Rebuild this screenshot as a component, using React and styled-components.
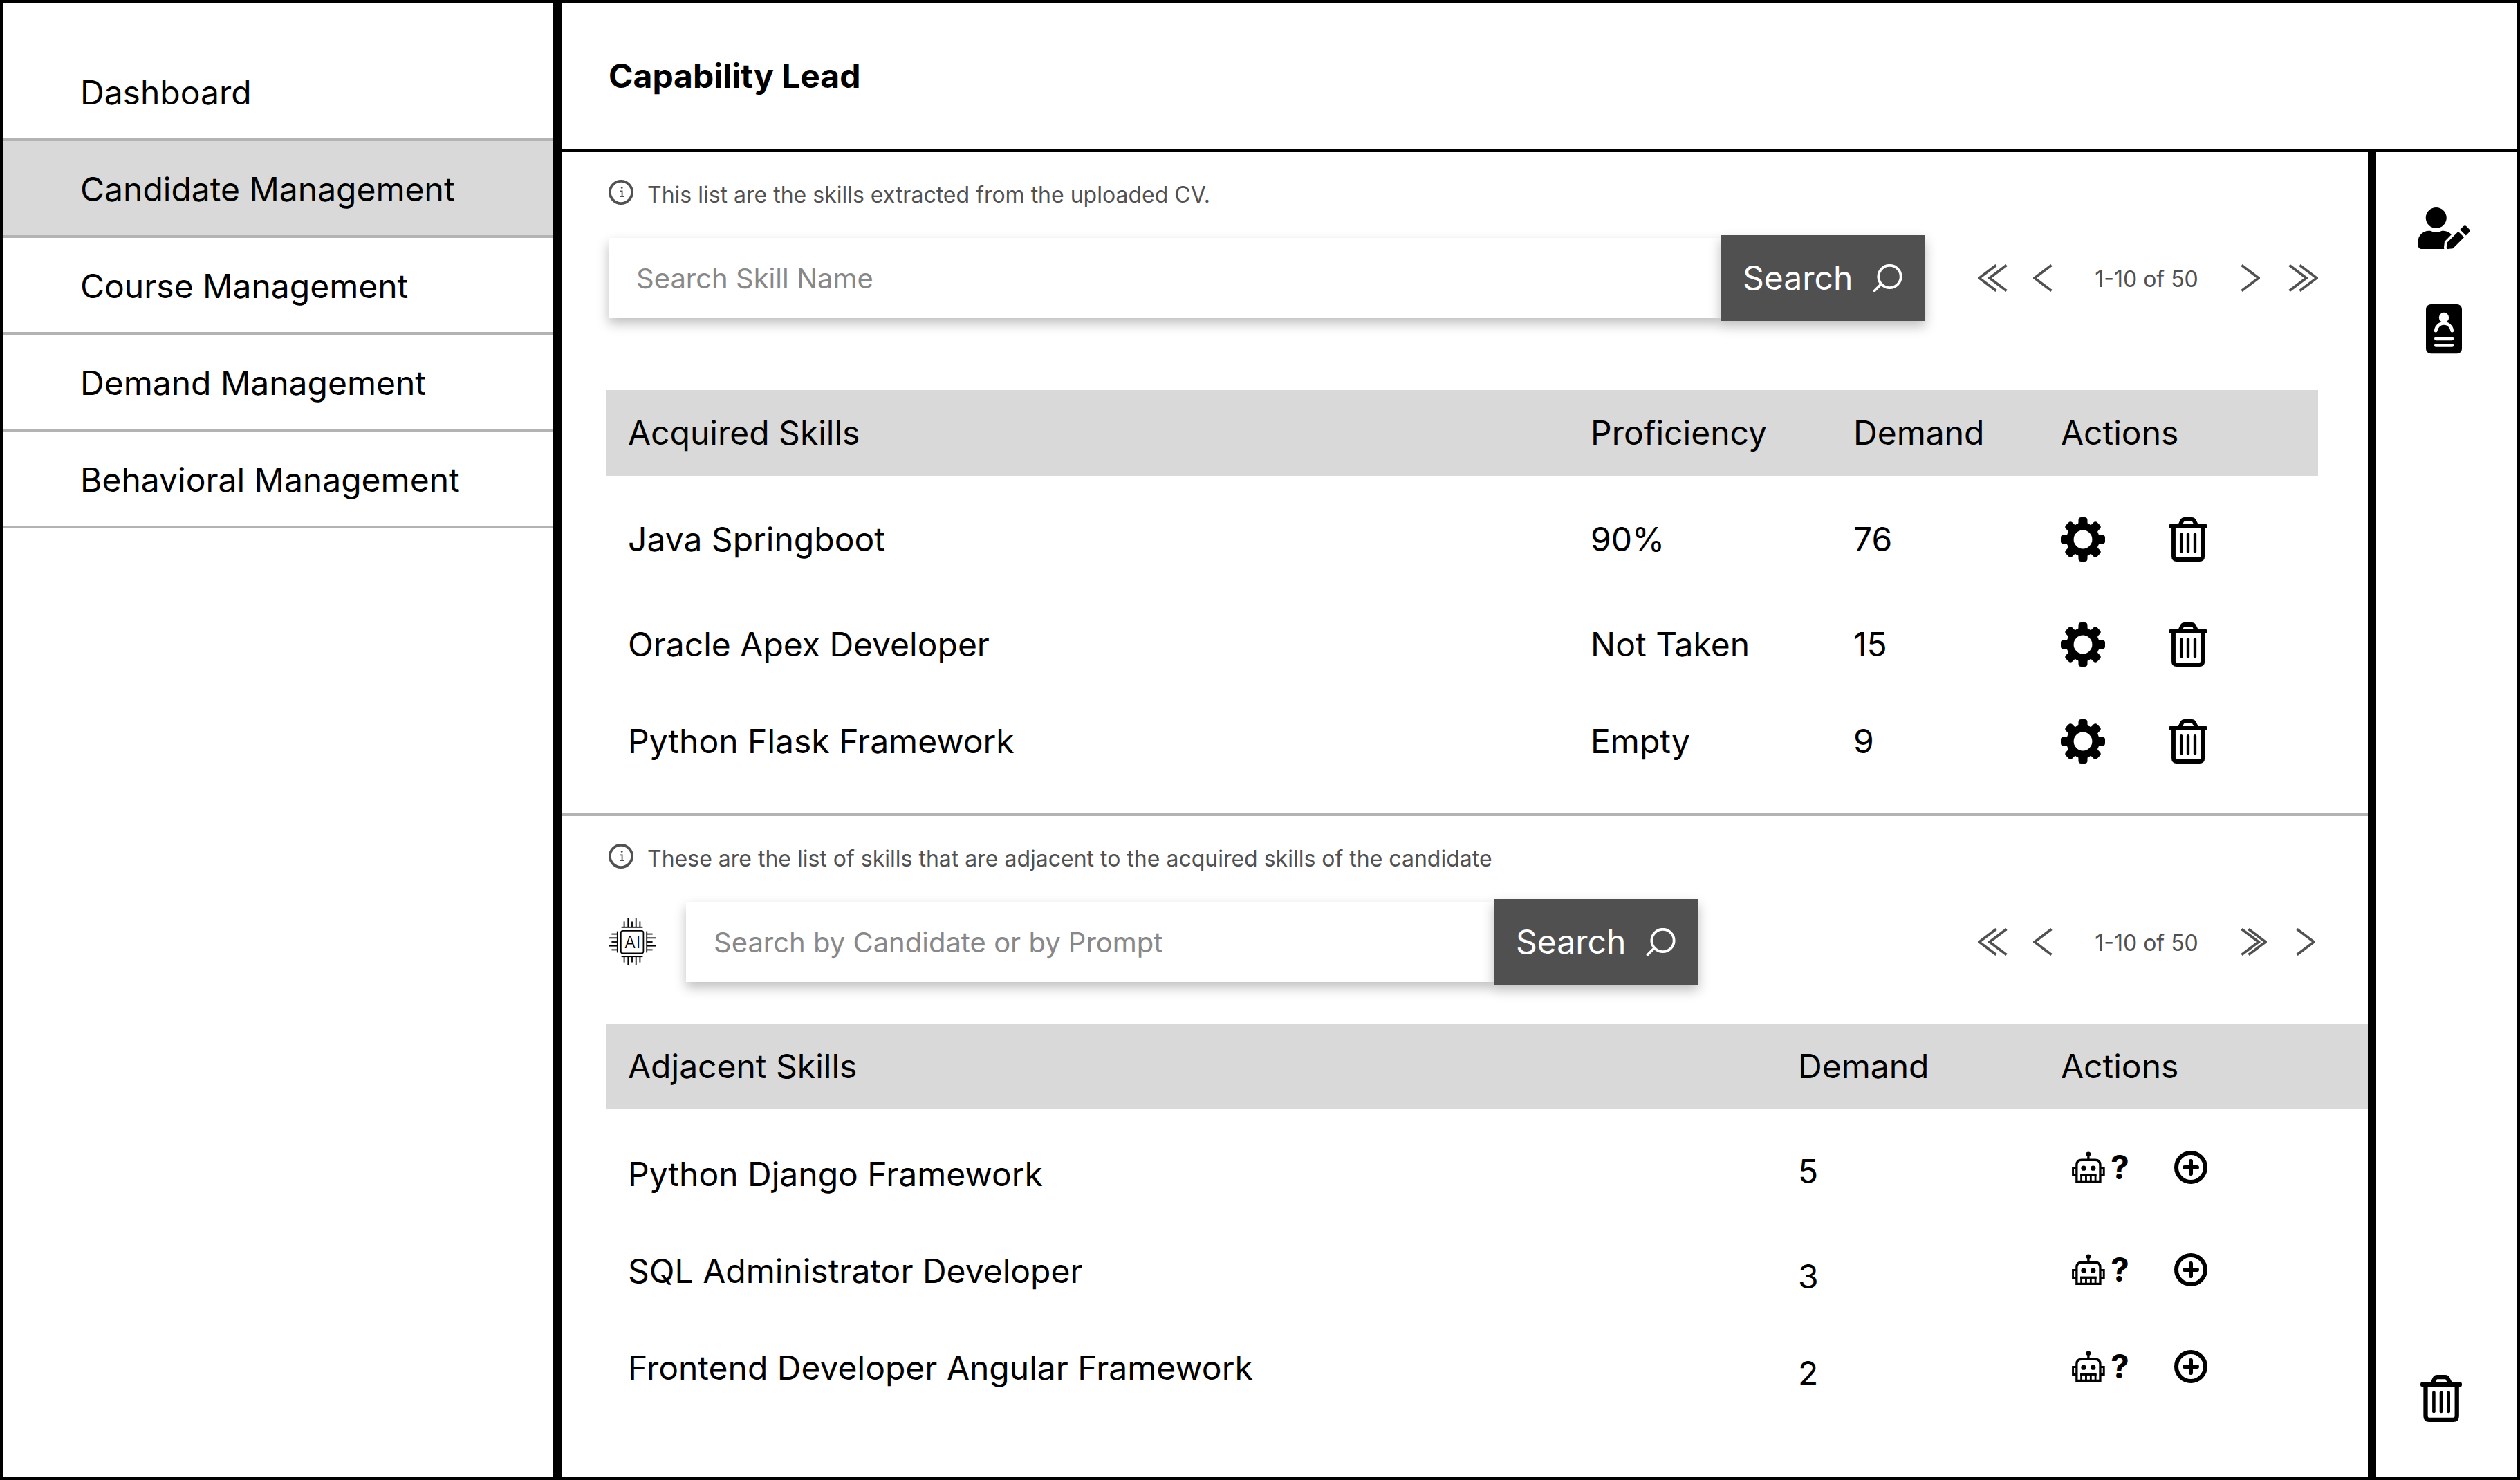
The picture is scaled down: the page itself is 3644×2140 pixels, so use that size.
import React from "react";
import styled, { createGlobalStyle, css } from "styled-components";
import { FaUserEdit } from "react-icons/fa";

const color = {
  ink: "#000000",
  paper: "#ffffff",
  band: "#d9d9d9",
  rule: "#b3b3b3",
  button: "#505050",
  note: "#515151",
  hint: "#888888",
};

const GlobalStyle = createGlobalStyle`
  *, *::before, *::after { box-sizing: border-box; }
  body {
    margin: 0;
    background: ${color.paper};
    color: ${color.ink};
    font-family: Inter, "Liberation Sans", sans-serif;
    font-size: 48px;
    line-height: 60px;
  }
  svg { display: block; flex: none; }
`;

/* ---------- page frame ---------- */

const Page = styled.div`
  display: flex;
  min-height: 100vh;
  border: 4px solid ${color.ink};
`;

const Sidebar = styled.nav`
  flex: none;
  width: 808px;
  padding-top: 60px;
  border-right: 12px solid ${color.ink};
`;

const NavList = styled.ul`
  margin: 0;
  padding: 0;
  list-style: none;
`;

const NavLink = styled.a`
  display: block;
  padding: 40px 32px 36px 112px;
  border-bottom: 4px solid ${color.rule};
  background: ${(p) => (p.$active ? color.band : "transparent")};
  color: inherit;
  text-decoration: none;
`;

const Content = styled.div`
  flex: 1;
  min-width: 0;
  display: flex;
  flex-direction: column;
`;

const Header = styled.header`
  display: flex;
  align-items: center;
  height: 216px;
  padding-left: 68px;
  border-bottom: 4px solid ${color.ink};
`;

const Title = styled.h1`
  margin: 0;
  font-size: 48px;
  font-weight: 700;
`;

const Body = styled.div`
  flex: 1;
  display: flex;
`;

const Main = styled.main`
  flex: 1;
  min-width: 0;
`;

const Rail = styled.aside`
  flex: none;
  width: 216px;
  display: flex;
  flex-direction: column;
  align-items: center;
  gap: 80px;
  padding: 80px 8px 80px 0;
  border-left: 12px solid ${color.ink};
`;

const RailEnd = styled.div`
  display: flex;
  margin-top: auto;
  padding-right: 8px;
`;

/* ---------- section parts ---------- */

const Section = styled.section`
  padding: 40px 0 34px 64px;
  & + & {
    border-top: 4px solid ${color.rule};
  }
`;

const Note = styled.p`
  display: flex;
  align-items: flex-start;
  gap: 20px;
  margin: 0 0 36px;
  padding-left: 4px;
  color: ${color.note};
  font-size: 32px;
  line-height: 44px;
`;

const Toolbar = styled.div`
  display: flex;
  align-items: center;
  padding: 0 72px 0 4px;
  margin-bottom: ${(p) => p.$after}px;
`;

const ChipMark = styled.div`
  margin-right: 44px;
`;

const SearchForm = styled.form`
  display: flex;
  align-items: center;
  min-width: 0;
  margin-right: 76px;
  ${(p) => (p.$basis ? css`flex: 0 1 ${p.$basis}px;` : css`flex: 1;`)}
`;

const SearchInput = styled.input`
  flex: 1;
  min-width: 0;
  height: 116px;
  padding: 0 40px;
  border: 0;
  border-radius: 0;
  background: ${color.paper};
  box-shadow: 0 8px 16px rgba(0, 0, 0, 0.25);
  color: ${color.ink};
  font: inherit;
  font-size: 40px;
  &::placeholder {
    color: ${color.hint};
    opacity: 1;
  }
`;

const SearchButton = styled.button`
  position: relative;
  flex: none;
  display: flex;
  align-items: center;
  justify-content: space-between;
  width: 296px;
  height: 124px;
  padding: 0 32px;
  border: 0;
  background: ${color.button};
  box-shadow: 0 8px 16px rgba(0, 0, 0, 0.25);
  color: ${color.paper};
  font: inherit;
  cursor: pointer;
`;

const Pager = styled.nav`
  flex: none;
  display: flex;
  align-items: center;
  gap: 56px;
  width: 492px;
  margin-left: auto;
  color: ${color.note};
  font-size: 32px;
`;

const PagerGroup = styled.div`
  display: flex;
  justify-content: space-between;
  width: ${(p) => p.$width}px;
`;

const PagerRange = styled.span`
  width: 160px;
  padding-top: 4px;
  text-align: center;
  white-space: nowrap;
`;

const IconButton = styled.button`
  display: inline-flex;
  align-items: center;
  padding: 0;
  border: 0;
  background: none;
  color: inherit;
  font: inherit;
  cursor: pointer;
`;

/* ---------- tables ---------- */

const Table = styled.table`
  width: ${(p) => (p.$bleed ? "100%" : "calc(100% - 72px)")};
  border-collapse: collapse;
  table-layout: fixed;
`;

const Col = styled.col`
  width: ${(p) => (p.$width ? p.$width + "px" : "auto")};
`;

const HeadCell = styled.th`
  height: 124px;
  padding: 0;
  background: ${color.band};
  font-weight: 400;
  text-align: left;
  &:first-child {
    padding-left: 32px;
  }
`;

const Cell = styled.td`
  height: 140px;
  padding: 0;
  &:first-child {
    padding-left: 32px;
  }
`;

const AcquiredBody = styled.tbody`
  tr:nth-child(1) td {
    height: 162px;
    padding-top: 22px;
  }
  tr:nth-child(2) td {
    height: 152px;
    padding-top: 12px;
  }
`;

const AdjacentBody = styled.tbody`
  tr td:nth-child(2) {
    padding-top: 16px;
  }
  tr td:nth-child(3) {
    padding-bottom: 4px;
  }
  tr:first-child td {
    height: 164px;
    padding-top: 24px;
  }
  tr:first-child td:nth-child(2) {
    padding-top: 16px;
  }
  tr:first-child td:nth-child(3) {
    padding-top: 8px;
  }
`;

const ManageActions = styled.div`
  display: flex;
  align-items: center;
  gap: 92px;
`;

const SuggestActions = styled.div`
  display: flex;
  align-items: center;
  justify-content: space-between;
  width: 212px;
  padding-left: 16px;
`;

const AskLabel = styled.span`
  margin-left: 8px;
  font-weight: 700;
`;

/* ---------- icons ---------- */

const EditUserIcon = styled(FaUserEdit)`
  width: 76px;
  height: 60px;
`;

const InfoIcon = () => (
  <svg width="36" height="36" viewBox="0 0 36 36" fill="none" stroke="currentColor" aria-hidden="true">
    <circle cx="18" cy="18" r="16.1" strokeWidth="3.8" />
    <circle cx="19.2" cy="11.6" r="1.4" fill="currentColor" stroke="none" />
    <path d="M16.8 16.4H19.6V24M16.4 24H22.6" strokeWidth="1.8" />
  </svg>
);

const SearchIcon = () => (
  <svg width="44" height="40" viewBox="0 0 44 40" fill="none" stroke="currentColor" strokeWidth="3.8" aria-hidden="true">
    <circle cx="24.5" cy="18" r="16.2" />
    <path d="M12.5 28.5L2.5 38.5" strokeLinecap="round" />
  </svg>
);

const Chevron = ({ flip }) => (
  <svg width="28" height="40" viewBox="0 0 28 40" fill="none" stroke="currentColor" strokeWidth="3.8" aria-hidden="true">
    <path d={flip ? "M1.5 1.5L26 20L1.5 38.5" : "M26.5 1.5L2 20L26.5 38.5"} />
  </svg>
);

const DoubleChevron = ({ flip, tight }) => {
  const shift = tight ? 10 : 15;
  const width = shift + 28;
  return (
    <svg width={width} height="40" viewBox={`0 0 ${width} 40`} fill="none" stroke="currentColor" strokeWidth="3.8" aria-hidden="true">
      {[0, shift].map((dx) => (
        <path
          key={dx}
          d={flip ? `M${1.5 + dx} 1.5L${26 + dx} 20L${1.5 + dx} 38.5` : `M${26.5 + dx} 1.5L${2 + dx} 20L${26.5 + dx} 38.5`}
        />
      ))}
    </svg>
  );
};

const GearIcon = () => (
  <svg width="64" height="64" viewBox="0 0 64 64" fill="currentColor" aria-hidden="true">
    <circle cx="32" cy="32" r="18.6" fill="none" stroke="currentColor" strokeWidth="10.4" />
    {[0, 45, 90, 135, 180, 225, 270, 315].map((a) => (
      <path
        key={a}
        transform={`rotate(${a} 32 32)`}
        d="M29.5 0H34.5Q38.5 0 38.5 4V7Q38.5 10.5 42 10.8V15H22V10.8Q25.5 10.5 25.5 7V4Q25.5 0 29.5 0Z"
      />
    ))}
  </svg>
);

const TrashIcon = ({ width = 56, height = 64 }) => (
  <svg width={width} height={height} viewBox="0 0 60 68" preserveAspectRatio="none" fill="none" stroke="currentColor" aria-hidden="true">
    <rect x="0" y="10.7" width="60" height="6.3" rx="2.2" fill="currentColor" stroke="none" />
    <path d="M17 13L20.6 5.6Q21.8 3.2 24.4 3.2H35.8Q38.4 3.2 39.6 5.6L43.4 13" strokeWidth="6.3" />
    <path d="M7.5 16V59.8Q7.5 64.8 12.5 64.8H47.7Q52.7 64.8 52.7 59.8V16" strokeWidth="6.3" />
    <path d="M19.4 25.6V53M30 25.6V53M40.7 25.6V53" strokeWidth="4.6" strokeLinecap="round" />
  </svg>
);

const BadgeIcon = () => (
  <svg width="52" height="72" viewBox="0 0 52 72" aria-hidden="true">
    <rect width="52" height="71.2" rx="7" fill="currentColor" />
    <circle cx="26" cy="19" r="7.2" fill="#fff" />
    <path d="M14.2 38.2A11.9 12.4 0 0 1 37.8 38.2" fill="none" stroke="#fff" strokeWidth="4.8" strokeLinecap="round" />
    <path d="M14.4 49.8H37.8M14.4 59.4H37.8" stroke="#fff" strokeWidth="4.8" strokeLinecap="round" />
  </svg>
);

const RobotIcon = () => (
  <svg width="48" height="46" viewBox="0 0 49 46" fill="none" stroke="currentColor" strokeWidth="3.4" aria-hidden="true">
    <circle cx="24.4" cy="3.4" r="3.4" fill="currentColor" stroke="none" />
    <path d="M24.4 5V12" />
    <path d="M7 43.8V19.5Q7 12 14.5 12H34.3Q41.8 12 41.8 19.5V43.8Z" />
    <path d="M7 23.6H1.6V34.8H7M41.8 23.6H47.2V34.8H41.8" strokeWidth="3" />
    <circle cx="17.4" cy="24.2" r="3.7" fill="currentColor" stroke="none" />
    <circle cx="31.4" cy="24.2" r="3.7" fill="currentColor" stroke="none" />
    <path d="M12.3 34.5H36.4" />
    <path d="M13.9 34V43M20.9 34V43M27.9 34V43M34.8 34V43" strokeWidth="2.9" />
  </svg>
);

const PlusIcon = () => (
  <svg width="48" height="48" viewBox="0 0 48 48" fill="none" stroke="currentColor" strokeWidth="6" aria-hidden="true">
    <circle cx="24" cy="24" r="21" />
    <path d="M15 24H33M24 15V33" strokeLinecap="round" />
  </svg>
);

const ChipIcon = () => {
  const pins = [22.6, 28.3, 34, 39.7, 45.4];
  return (
    <svg width="68" height="68" viewBox="0 0 68 68" fill="none" stroke="currentColor" strokeWidth="1.8" role="img" aria-label="AI">
      <rect x="17.8" y="17.8" width="32.6" height="32.6" rx="3" />
      {[0, 90, 180, 270].map((a) => (
        <g key={a} transform={`rotate(${a} 34 34)`}>
          <path d="M18.6 12.8H49.4" />
          {pins.map((x, i) => (
            <path key={x} d={`M${x} ${i % 2 ? 0 : 4.4}V12.8`} />
          ))}
        </g>
      ))}
      <text x="23 40" y="43" fontFamily="Inter, sans-serif" fontSize="24" fontWeight="300" fill="currentColor" stroke="none">
        AI
      </text>
    </svg>
  );
};

/* ---------- data ---------- */

const navItems = [
  "Dashboard",
  "Candidate Management",
  "Course Management",
  "Demand Management",
  "Behavioral Management",
];

const acquired = [
  { name: "Java Springboot", proficiency: "90%", demand: 76 },
  { name: "Oracle Apex Developer", proficiency: "Not Taken", demand: 15 },
  { name: "Python Flask Framework", proficiency: "Empty", demand: 9 },
];

const adjacent = [
  { name: "Python Django Framework", demand: 5 },
  { name: "SQL Administrator Developer", demand: 3 },
  { name: "Frontend Developer Angular Framework", demand: 2 },
];

/* ---------- composed parts ---------- */

function Search({ placeholder, basis }) {
  return (
    <SearchForm $basis={basis} role="search" onSubmit={(e) => e.preventDefault()}>
      <SearchInput type="text" placeholder={placeholder} aria-label={placeholder} />
      <SearchButton type="submit">
        Search
        <SearchIcon />
      </SearchButton>
    </SearchForm>
  );
}

function Pagination({ label, lastFirst }) {
  const next = (
    <IconButton key="next" type="button" aria-label="Next page">
      <Chevron flip />
    </IconButton>
  );
  const last = (
    <IconButton key="last" type="button" aria-label="Last page">
      <DoubleChevron flip tight={lastFirst} />
    </IconButton>
  );
  return (
    <Pager aria-label={label}>
      <PagerGroup $width={108}>
        <IconButton type="button" aria-label="First page">
          <DoubleChevron />
        </IconButton>
        <IconButton type="button" aria-label="Previous page">
          <Chevron />
        </IconButton>
      </PagerGroup>
      <PagerRange>1-10 of 50</PagerRange>
      <PagerGroup $width={lastFirst ? 108 : 112}>{lastFirst ? [last, next] : [next, last]}</PagerGroup>
    </Pager>
  );
}

export default function App() {
  return (
    <>
      <GlobalStyle />
      <Page>
        <Sidebar aria-label="Main">
          <NavList>
            {navItems.map((item) => {
              const active = item === "Candidate Management";
              return (
                <li key={item}>
                  <NavLink href="#" $active={active} aria-current={active ? "page" : undefined}>
                    {item}
                  </NavLink>
                </li>
              );
            })}
          </NavList>
        </Sidebar>

        <Content>
          <Header>
            <Title>Capability Lead</Title>
          </Header>

          <Body>
            <Main>
              <Section aria-label="Acquired skills">
                <Note>
                  <InfoIcon />
                  This list are the skills extracted from the uploaded CV.
                </Note>
                <Toolbar $after={100}>
                  <Search placeholder="Search Skill Name" />
                  <Pagination label="Acquired skills pages" />
                </Toolbar>
                <Table>
                  <colgroup>
                    <Col />
                    <Col $width={380} />
                    <Col $width={300} />
                    <Col $width={372} />
                  </colgroup>
                  <thead>
                    <tr>
                      <HeadCell scope="col">Acquired Skills</HeadCell>
                      <HeadCell scope="col">Proficiency</HeadCell>
                      <HeadCell scope="col">Demand</HeadCell>
                      <HeadCell scope="col">Actions</HeadCell>
                    </tr>
                  </thead>
                  <AcquiredBody>
                    {acquired.map((row) => (
                      <tr key={row.name}>
                        <Cell>{row.name}</Cell>
                        <Cell>{row.proficiency}</Cell>
                        <Cell>{row.demand}</Cell>
                        <Cell>
                          <ManageActions>
                            <IconButton type="button" aria-label={`Configure ${row.name}`}>
                              <GearIcon />
                            </IconButton>
                            <IconButton type="button" aria-label={`Delete ${row.name}`}>
                              <TrashIcon />
                            </IconButton>
                          </ManageActions>
                        </Cell>
                      </tr>
                    ))}
                  </AcquiredBody>
                </Table>
              </Section>

              <Section aria-label="Adjacent skills">
                <Note>
                  <InfoIcon />
                  These are the list of skills that are adjacent to the acquired skills of the candidate
                </Note>
                <Toolbar $after={56}>
                  <ChipMark>
                    <ChipIcon />
                  </ChipMark>
                  <Search placeholder="Search by Candidate or by Prompt" basis={1464} />
                  <Pagination label="Adjacent skills pages" lastFirst />
                </Toolbar>
                <Table $bleed>
                  <colgroup>
                    <Col />
                    <Col $width={380} />
                    <Col $width={444} />
                  </colgroup>
                  <thead>
                    <tr>
                      <HeadCell scope="col">Adjacent Skills</HeadCell>
                      <HeadCell scope="col">Demand</HeadCell>
                      <HeadCell scope="col">Actions</HeadCell>
                    </tr>
                  </thead>
                  <AdjacentBody>
                    {adjacent.map((row) => (
                      <tr key={row.name}>
                        <Cell>{row.name}</Cell>
                        <Cell>{row.demand}</Cell>
                        <Cell>
                          <SuggestActions>
                            <IconButton type="button" aria-label={`Ask about ${row.name}`}>
                              <RobotIcon />
                              <AskLabel>?</AskLabel>
                            </IconButton>
                            <IconButton type="button" aria-label={`Add ${row.name}`}>
                              <PlusIcon />
                            </IconButton>
                          </SuggestActions>
                        </Cell>
                      </tr>
                    ))}
                  </AdjacentBody>
                </Table>
              </Section>
            </Main>

            <Rail>
              <IconButton type="button" aria-label="Edit candidate">
                <EditUserIcon />
              </IconButton>
              <IconButton type="button" aria-label="Candidate profile">
                <BadgeIcon />
              </IconButton>
              <RailEnd>
                <IconButton type="button" aria-label="Delete candidate">
                  <TrashIcon width={60} height={68} />
                </IconButton>
              </RailEnd>
            </Rail>
          </Body>
        </Content>
      </Page>
    </>
  );
}
